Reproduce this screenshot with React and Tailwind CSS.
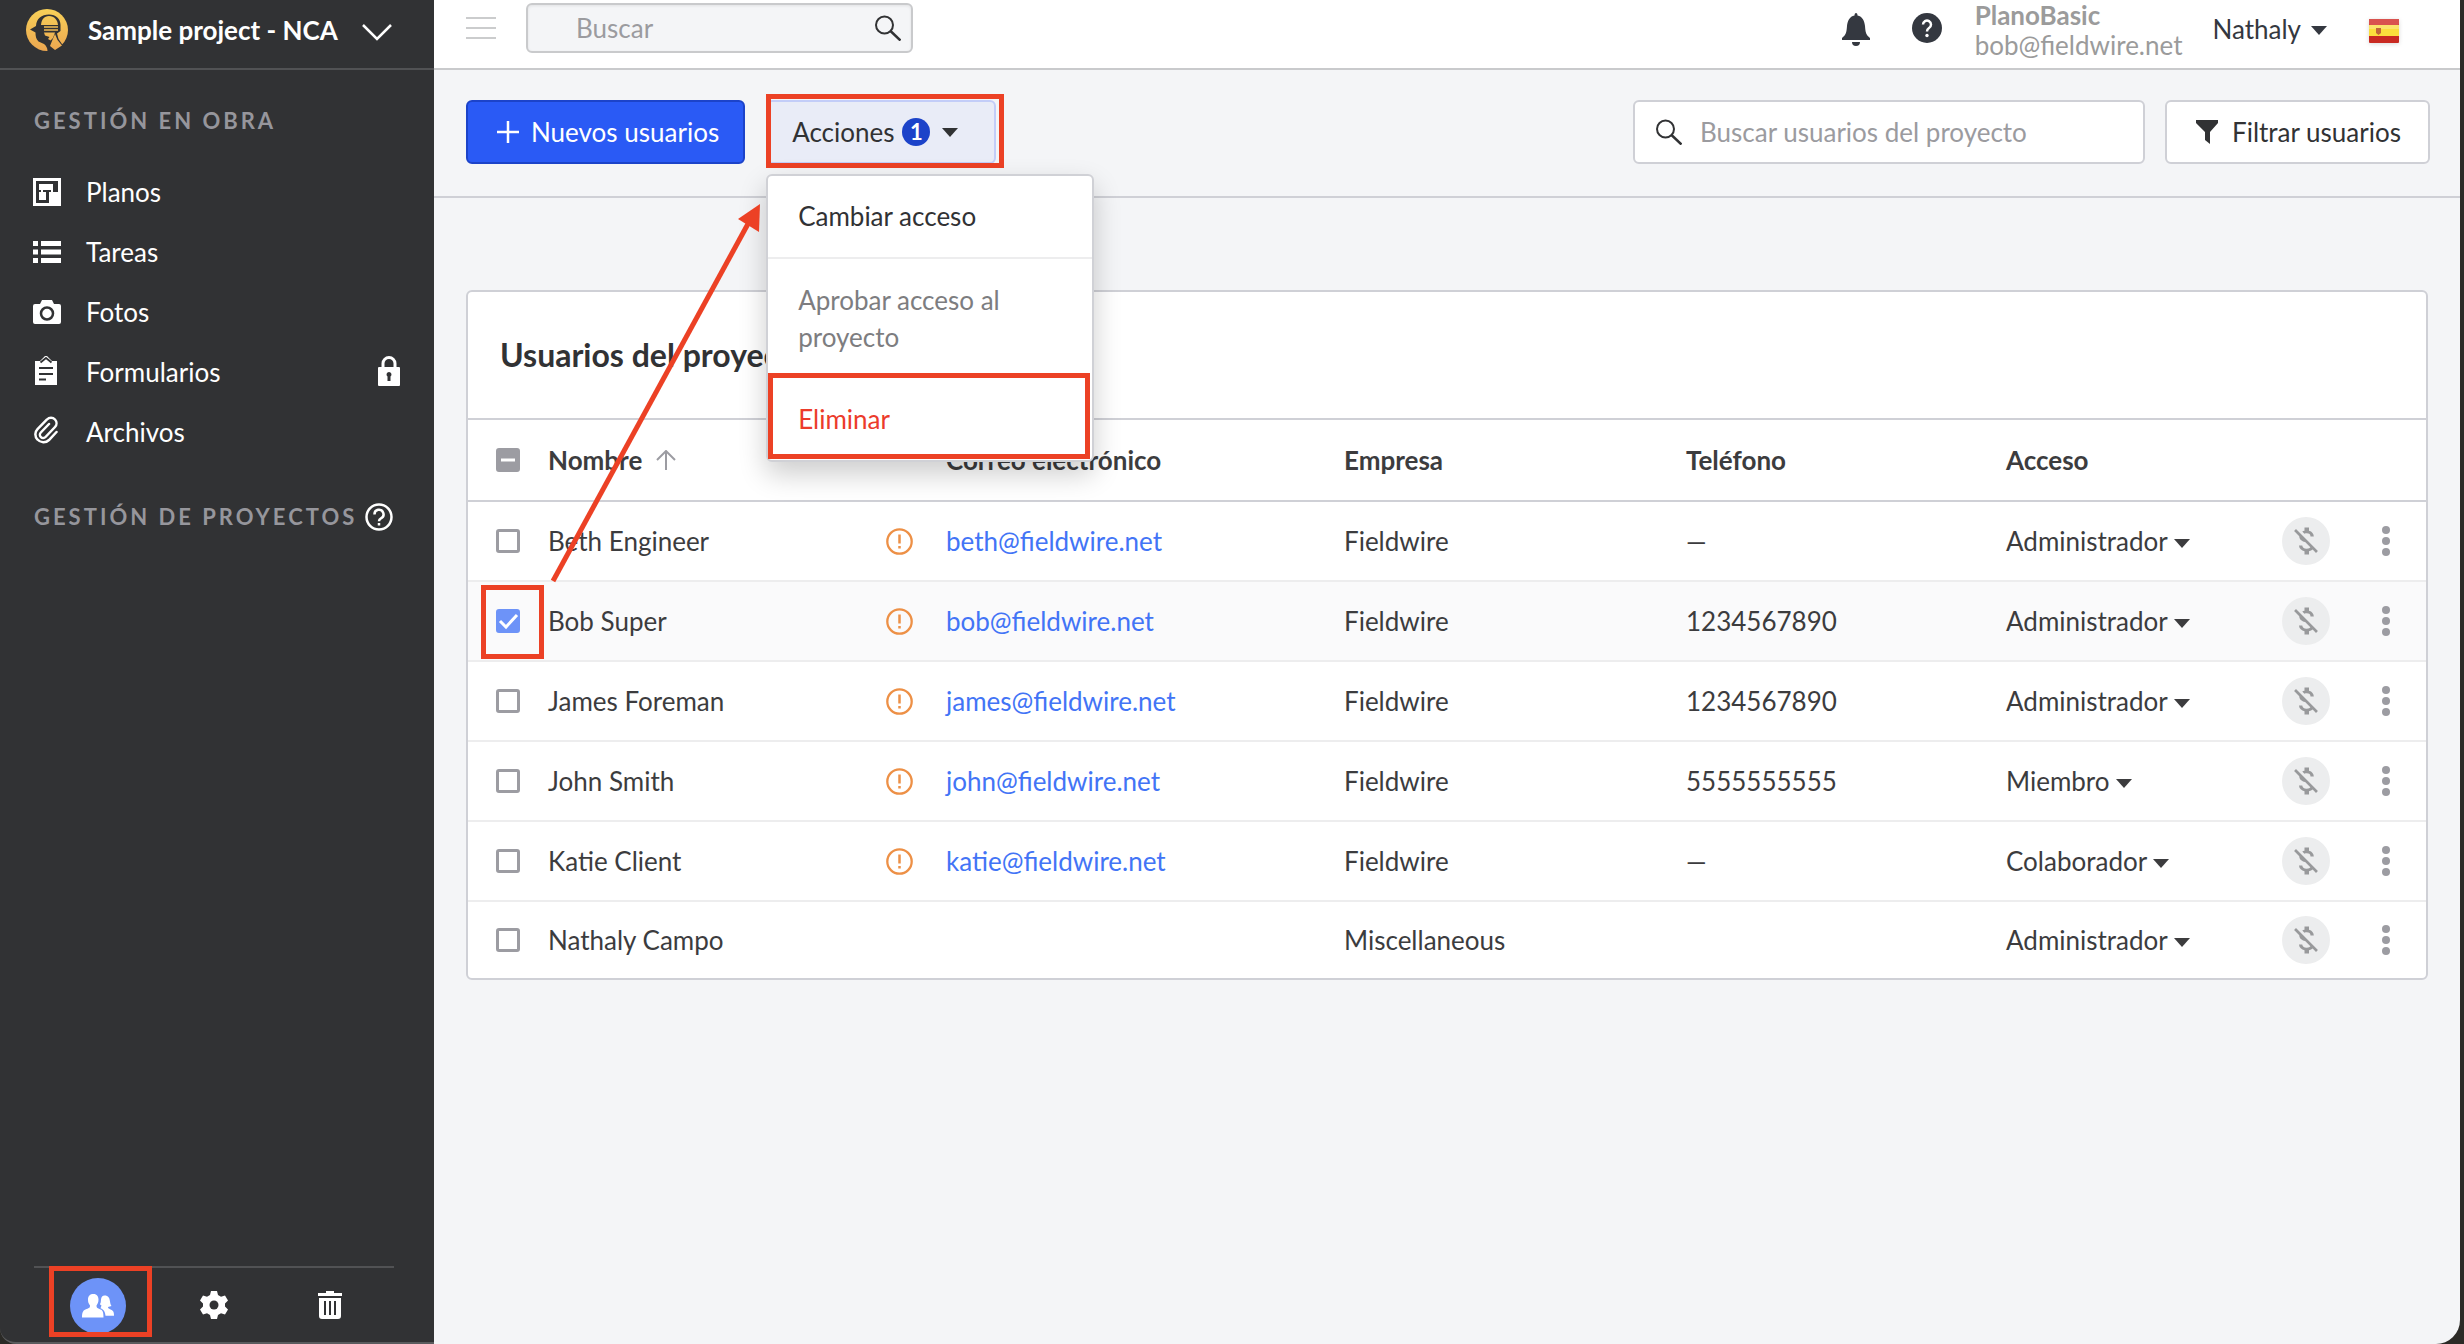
import React, { useState } from 'react';
import { MdMoneyOff } from 'react-icons/md';

const USERS = [
  { name: 'Beth Engineer', email: 'beth@fieldwire.net', company: 'Fieldwire', phone: '—', access: 'Administrador' },
  { name: 'Bob Super', email: 'bob@fieldwire.net', company: 'Fieldwire', phone: '1234567890', access: 'Administrador' },
  { name: 'James Foreman', email: 'james@fieldwire.net', company: 'Fieldwire', phone: '1234567890', access: 'Administrador' },
  { name: 'John Smith', email: 'john@fieldwire.net', company: 'Fieldwire', phone: '5555555555', access: 'Miembro' },
  { name: 'Katie Client', email: 'katie@fieldwire.net', company: 'Fieldwire', phone: '—', access: 'Colaborador' },
  { name: 'Nathaly Campo', email: '', company: 'Miscellaneous', phone: '', access: 'Administrador' },
];

const Logo = () => (
  <svg viewBox="0 0 42 42" className="h-[42px] w-[42px]">
    <defs>
      <linearGradient id="gold" x1="0" y1="0" x2="0" y2="42" gradientUnits="userSpaceOnUse">
        <stop offset="0" stopColor="#f8d158" />
        <stop offset="1" stopColor="#eba650" />
      </linearGradient>
    </defs>
    <circle cx="21" cy="21" r="21" fill="url(#gold)" />
    {/* head silhouette */}
    <path
      d="M4 20.500L10 17C10.500 9.500 15.500 5.500 23 5.500C30 5.500 34.500 10 34.500 16V22L31 24.500L32.500 30L37 36.500L29 42H21.500C21.500 39 20 36.500 18 35L12.500 32.500C10 30 9.500 27 9.500 23.500Z"
      fill="#313234"
    />
    {/* helmet, visor, face and hand */}
    <path d="M15 16C15.500 10.500 18 7 23 7C28.500 7 31.500 11 32 16Z" fill="url(#gold)" />
    <path d="M18 18H32M18 21H32" stroke="url(#gold)" strokeWidth="1.300" />
    <path d="M18 23.500H29L27 29L24.500 31.500L22 30L23.500 28L19 26.500Z" fill="url(#gold)" />
    <path d="M29 25L31.500 31L36 36.500L29 41L24 37L26 32Z" fill="url(#gold)" />
  </svg>
);

const PlanIcon = () => (
  <svg viewBox="0 0 28 28" className="h-7 w-7">
    <path fill="#fff" d="M0 0h28v28H0z" />
    <path fill="#313234" d="M3 3h22v11h-5V6H6v6h2v2H6v8h7v-8h-3v-2h8v2h-2v11H3z" />
  </svg>
);

const ListIcon = () => (
  <svg viewBox="0 0 28 22" className="h-[22px] w-7" fill="#fff">
    <path d="M0 0h5v5H0zM8 0h20v5H8zM0 8.500h5v5H0zM8 8.500h20v5H8zM0 17h5v5H0zM8 17h20v5H8z" />
  </svg>
);

const CameraIcon = () => (
  <svg viewBox="0 0 28 24" className="h-6 w-7">
    <path fill="#fff" d="M2 4h5l2-4h10l2 4h5a2 2 0 0 1 2 2v16a2 2 0 0 1-2 2H2a2 2 0 0 1-2-2V6a2 2 0 0 1 2-2z" />
    <circle cx="14" cy="13.500" r="6" fill="#fff" stroke="#313234" strokeWidth="2.500" />
  </svg>
);

const ClipboardIcon = () => (
  <svg viewBox="0 0 22 29" className="mb-1 ml-0.5 h-[29px] w-[22px]">
    <path fill="#fff" d="M0 5h5l5-5h2l5 5h5v24H0z" />
    <path d="M5.500 6.500L11 2l5.500 4.500M4 12h14M4 18h14M4 23.500h7" fill="none" stroke="#313234" strokeWidth="1.800" />
  </svg>
);

const ClipIcon = () => (
  <svg viewBox="0 0 24 28" className="mb-1 ml-px h-7 w-6" fill="none" stroke="#fff" strokeWidth="2.500" strokeLinecap="round">
    <path d="M22.500 16l-7.500 8a8 8 0 0 1-11.500-.5 7.500 7.500 0 0 1 0-10.500L13 3.500a5.500 5.500 0 0 1 8 0 5.500 5.500 0 0 1 0 7.500l-9.500 10a3.200 3.200 0 0 1-4.700-4.500L15 8" />
  </svg>
);

const LockIcon = () => (
  <svg viewBox="0 0 22 30" className="mb-0.5 h-[30px] w-[22px]">
    <path d="M5 12V7.500a6 6 0 0 1 12 0V12" fill="none" stroke="#fff" strokeWidth="3" />
    <rect y="11" width="22" height="19" rx="1" fill="#fff" />
    <path d="M11 16a2.500 2.500 0 0 1 1.500 4.500V25h-3v-4.500A2.500 2.500 0 0 1 11 16z" fill="#313234" />
  </svg>
);

const HelpOutline = () => (
  <svg viewBox="0 0 28 28" className="h-7 w-7" fill="none" stroke="#fff" strokeWidth="2.500">
    <circle cx="14" cy="14" r="12.500" />
    <path d="M9.500 11.500a4.500 4.500 0 1 1 6.500 3.800c-1.500.9-2 1.500-2 3" />
    <path d="M14 20v2.500" />
  </svg>
);

const SearchIcon = () => (
  <svg viewBox="0 0 26 26" className="h-[26px] w-[26px] shrink-0" fill="none" stroke="#313234" strokeWidth="2">
    <circle cx="9.500" cy="10" r="8.500" />
    <path d="M15.500 16l10 9.500" strokeWidth="2.500" />
  </svg>
);

const Caret = () => (
  <svg viewBox="0 0 16 9" className="h-[9px] w-4 shrink-0">
    <path d="M0 0h16L8 9z" fill="currentColor" />
  </svg>
);

const BellIcon = () => (
  <svg viewBox="0 0 28 33" className="h-[33px] w-7" fill="#343840">
    <path d="M14 0c1 0 1.500 1 1.500 2.500C20.500 3.500 22.500 8 23 13c.4 6 1 9 5 12v2H0v-2c4-3 4.600-6 5-12 .5-5 2.500-9.500 7.500-10.500C12.500 1 13 0 14 0zM10 29h8a4 4 0 0 1-8 0z" />
  </svg>
);

const HelpSolid = () => (
  <svg viewBox="0 0 30 30" className="h-[30px] w-[30px]">
    <circle cx="15" cy="15" r="15" fill="#343840" />
    <path d="M11 11.500a4 4 0 1 1 6 3.500c-1.500 1-2 1.700-2 3.500" fill="none" stroke="#fff" strokeWidth="2.500" />
    <circle cx="15" cy="22.500" r="1.700" fill="#fff" />
  </svg>
);

const SpainFlag = () => (
  <svg viewBox="0 0 30 24" className="h-6 w-[30px] drop-shadow-sm">
    <rect width="30" height="24" rx="1" fill="#c92a22" />
    <rect width="30" height="6" rx="1" fill="#d9534f" />
    <rect y="6" width="30" height="11" fill="#fbdf3c" />
    <rect y="6" width="30" height="4" fill="#fbe56c" />
    <path d="M7 9h5v5l-2.500 2L7 14z" fill="#c0673a" />
  </svg>
);

const FunnelIcon = () => (
  <svg viewBox="0 0 22 24" className="h-6 w-[22px]">
    <path d="M0 0h22v3l-8 9v12l-5-4v-8L0 3z" fill="#313234" />
  </svg>
);

const AlertIcon = () => (
  <svg viewBox="0 0 27 27" className="h-[27px] w-[27px]" fill="none" stroke="#ed9046" strokeWidth="2.300">
    <circle cx="13.500" cy="13.500" r="12.200" />
    <path d="M13.500 6.500v9M13.500 18v2.500" strokeWidth="2.500" />
  </svg>
);

const PeopleIcon = () => (
  <svg viewBox="0 0 32 24" className="h-6 w-8" fill="#fff">
    <path d="M11.500 0c3.500 0 5 2.500 5 5.500 0 3-1 4.500-2 6 0 2 .5 2.500 3 3.500 3 1 4 2 4 8.500H0c0-6 1.500-7.500 4.500-8.500 3-1 3.500-1.500 3.500-3.500-1.500-2-2-3.500-2-6C6 2 8 0 11.500 0z" />
    <path d="M22.500 1.500c4 0 5 2.500 5.500 6 .3 2 .5 3 1.500 4.500l-3.500 1c0 1.500 1 1.800 3 2.700 2 .8 3 2 3 6h-8.500c-.5-4-1.500-6-5-7.500l1-2.700c-1-.5-1.500-1-1.500-1.500 1-1 .8-3 1-4.500.3-2.500 1.500-4 3.500-4z" />
  </svg>
);

const GearIcon = () => (
  <svg viewBox="0 0 28 28" className="h-7 w-7">
    <path
      d="M11 0h6l1 4 3 1.700 4-1.200 3 5-3 2.900v3.200l3 2.900-3 5-4-1.200L18 24l-1 4h-6l-1-4-3-1.700-4 1.200-3-5 3-2.900v-3.200L0 9.500l3-5 4 1.200L10 4z"
      fill="#fff"
    />
    <circle cx="14" cy="14" r="4.500" fill="#313234" />
  </svg>
);

const TrashIcon = () => (
  <svg viewBox="0 0 24 28" className="h-7 w-6">
    <path d="M8 0h8v2h8v3H0V2h8zM1 7h22v18a3 3 0 0 1-3 3H4a3 3 0 0 1-3-3z" fill="#fff" />
    <path d="M7 10v14M12 10v14M17 10v14" stroke="#313234" strokeWidth="2" />
  </svg>
);

const NAV = [
  { label: 'Planos', icon: <PlanIcon /> },
  { label: 'Tareas', icon: <ListIcon /> },
  { label: 'Fotos', icon: <CameraIcon /> },
  { label: 'Formularios', icon: <ClipboardIcon />, locked: true },
  { label: 'Archivos', icon: <ClipIcon /> },
];

const Checkbox = ({ label, checked, mixed, onChange }) => (
  <label className="relative block h-6 w-6">
    <input
      type="checkbox"
      aria-label={label}
      checked={checked}
      onChange={onChange}
      className={`block h-6 w-6 appearance-none rounded-[3px] border-[3px] ${
        checked ? 'border-[#6d93f8] bg-[#6d93f8]' : mixed ? 'border-[#9c9ca2] bg-[#9c9ca2]' : 'border-[#9c9ca2] bg-white'
      }`}
    />
    {(checked || mixed) && (
      <svg viewBox="0 0 24 24" className="pointer-events-none absolute inset-0 h-6 w-6" fill="none" stroke="#fff" strokeWidth="3">
        <path d={checked ? 'M4 12l6 6L21 6' : 'M5 12h14'} />
      </svg>
    )}
  </label>
);

const Sidebar = () => (
  <aside className="flex w-[434px] shrink-0 flex-col rounded-bl-2xl border-b-2 border-[#5a5b5d] bg-[#313234] text-white">
    <button className="flex h-[70px] items-center border-b-2 border-[#515254] pb-2 pl-[26px] text-left">
      <Logo />
      <span className="ml-5 text-[26px] leading-8 font-bold">Sample project - NCA</span>
      <svg viewBox="0 0 30 17" className="mt-1 ml-6 h-[17px] w-[30px]" fill="none" stroke="#fff" strokeWidth="2.500">
        <path d="M1 1l14 14L29 1" />
      </svg>
    </button>

    <h2 className="mt-8 pl-[34px] text-[22px] leading-[38px] font-bold tracking-[3px] text-[#96969c]">GESTIÓN EN OBRA</h2>
    <nav className="mt-[22px]">
      {NAV.map((item) => (
        <a key={item.label} href="#" className="flex h-[60px] items-center pr-[34px] pl-[33px] text-[26px]">
          <span className="flex w-[53px] items-center">{item.icon}</span>
          <span className="flex-1">{item.label}</span>
          {item.locked && <LockIcon />}
        </a>
      ))}
    </nav>
    <div className="mt-9 flex items-center pl-[34px]">
      <h2 className="text-[22px] leading-[38px] font-bold tracking-[3px] text-[#96969c]">GESTIÓN DE PROYECTOS</h2>
      <button aria-label="Ayuda" className="ml-2">
        <HelpOutline />
      </button>
    </div>

    <div className="mt-auto mr-10 ml-[34px] flex border-t-2 border-[#515254] pl-[15px]">
      <div className="-mt-0.5 mb-[5px] flex h-[71px] w-[103px] items-start overflow-hidden border-[5px] border-[#ec4125] pt-[7px] pl-4">
        <button aria-label="Personas" className="flex h-14 w-14 shrink-0 items-center justify-center rounded-full bg-[#6d93f8]">
          <PeopleIcon />
        </button>
      </div>
      <button aria-label="Ajustes" className="ml-2 flex w-[108px] items-center justify-center">
        <GearIcon />
      </button>
      <button aria-label="Papelera" className="flex w-[124px] items-center justify-center">
        <TrashIcon />
      </button>
    </div>
  </aside>
);

const TopBar = () => (
  <header className="flex h-[70px] items-start border-b-2 border-[#c9cacc] bg-white pr-[61px] pl-8">
    <button aria-label="Menú" className="mt-[17px] flex w-[30px] flex-col gap-2">
      <span className="h-0.5 bg-[#cbcccd]" />
      <span className="h-0.5 bg-[#cbcccd]" />
      <span className="h-0.5 bg-[#cbcccd]" />
    </button>
    <label className="mt-[3px] ml-[30px] flex h-[50px] w-[387px] items-center rounded-md border-2 border-[#c9cacc] bg-[#f4f5f7] pr-2.5 pl-12 shadow-[inset_0_1px_3px_rgba(0,0,0,0.08)]">
      <input aria-label="Buscar" placeholder="Buscar" className="min-w-0 flex-1 text-[26px] outline-none placeholder:text-[#9b9b9f]" />
      <SearchIcon />
    </label>
    <div className="ml-auto flex items-start text-[26px]">
      <button aria-label="Notificaciones" className="mt-[13px]">
        <BellIcon />
      </button>
      <button aria-label="Ayuda" className="mt-[13px] ml-[42px]">
        <HelpSolid />
      </button>
      <div className="ml-[33px] leading-[30px] text-[#9b9b9b]">
        <p className="font-bold">PlanoBasic</p>
        <p>bob@fieldwire.net</p>
      </div>
      <button className="mt-3 ml-[30px] flex items-center gap-2.5 leading-[34px] text-[#343840]">
        Nathaly
        <span className="mt-0.5">
          <Caret />
        </span>
      </button>
      <button aria-label="Español" className="mt-[19px] ml-[42px]">
        <SpainFlag />
      </button>
    </div>
  </header>
);

const ActionsMenu = () => (
  <div className="absolute top-[74px] left-0 z-10 w-[328px] rounded-md border-2 border-[#d0d1d6] bg-white pb-px text-[26px] leading-[37px] shadow-[0_12px_28px_rgba(0,0,0,0.2)]">
    <button className="block h-[83px] w-full border-b-2 border-[#ededee] px-[30px] text-left text-[#313234]">Cambiar acceso</button>
    <button className="block h-[114px] w-full px-[30px] pt-1.5 text-left text-[#7d7d80]">Aprobar acceso al proyecto</button>
    <button className="block h-[86px] w-[322px] border-[5px] border-[#ec4125] px-[25px] pt-1.5 text-left text-[#ec3b2b]">Eliminar</button>
  </div>
);

const Toolbar = ({ count, open, onToggle }) => (
  <div className="flex items-center border-b-2 border-[#cfd0d6] pt-[30px] pr-[30px] pb-8 pl-8 text-[26px]">
    <button className="flex h-16 items-center rounded-md border-2 border-[#1c43c9] bg-[#2a5af5] pr-6 pl-[29px] text-white">
      <svg viewBox="0 0 22 22" className="mr-3 h-[22px] w-[22px]" stroke="#fff" strokeWidth="2.500">
        <path d="M11 0v22M0 11h22" />
      </svg>
      Nuevos usuarios
    </button>
    <div className="relative ml-[21px]">
      <button
        onClick={onToggle}
        aria-expanded={open}
        className="flex h-16 w-[230px] items-center rounded-md border-2 border-[#c3cdf8] bg-[#e9ecf7] pl-6 text-[#313234]"
      >
        Acciones
        <span className="ml-2 flex h-7 w-7 items-center justify-center rounded-full bg-[#1c43c9] text-[22px] leading-7 font-bold text-white">
          {count}
        </span>
        <span className="ml-3">
          <Caret />
        </span>
      </button>
      <div className="pointer-events-none absolute -top-1.5 left-0 h-[74px] w-[238px] border-[5px] border-[#ec4125]" />
      {open && <ActionsMenu />}
    </div>
    <label className="ml-auto flex h-16 w-[512px] items-center gap-[18px] rounded-md border-2 border-[#cfd0d6] bg-white px-[21px]">
      <SearchIcon />
      <input
        aria-label="Buscar usuarios del proyecto"
        placeholder="Buscar usuarios del proyecto"
        className="min-w-0 flex-1 outline-none placeholder:text-[#9b9b9f]"
      />
    </label>
    <button className="ml-5 flex h-16 items-center gap-3.5 rounded-md border-2 border-[#cfd0d6] bg-white pr-[27px] pl-[29px] text-[#313234]">
      <FunnelIcon />
      Filtrar usuarios
    </button>
  </div>
);

const UsersTable = ({ selected, onSelect }) => (
  <section className="mt-[92px] mr-8 ml-8 rounded-md border-2 border-[#cfd0d6] bg-white">
    <h1 className="px-8 py-[43px] text-[32px] leading-10 font-bold text-[#313234]">Usuarios del proyecto</h1>
    <table className="w-full table-fixed border-separate border-spacing-0 text-left text-[26px] leading-8 text-[#3c3c3e]">
      <colgroup>
        <col className="w-[80px]" />
        <col className="w-[338px]" />
        <col className="w-[60px]" />
        <col className="w-[398px]" />
        <col className="w-[342px]" />
        <col className="w-[320px]" />
        <col className="w-[276px]" />
        <col className="w-[80px]" />
        <col className="w-[64px]" />
      </colgroup>
      <thead>
        <tr className="h-[84px] *:border-y-2 *:border-[#cfd0d6]">
          <th className="pl-7">
            <Checkbox label="Seleccionar todos" checked={false} mixed={selected.length > 0} onChange={() => onSelect(null)} />
          </th>
          <th>
            <span className="flex items-center gap-3.5">
              Nombre
              <svg viewBox="0 0 20 20" className="h-5 w-5" fill="none" stroke="#9c9ca2" strokeWidth="2">
                <path d="M10 20V1M1 10l9-9 9 9" />
              </svg>
            </span>
          </th>
          <th />
          <th>Correo electrónico</th>
          <th>Empresa</th>
          <th>Teléfono</th>
          <th>Acceso</th>
          <th />
          <th />
        </tr>
      </thead>
      <tbody>
        {USERS.map((user) => {
          const checked = selected.includes(user.name);
          return (
            <tr
              key={user.name}
              className={`h-20 *:border-b-2 *:border-[#ededee] last:h-[76px] last:*:border-b-0 ${checked ? 'bg-[#fafafb]' : ''}`}
            >
              <td className="pl-7">
                <Checkbox label={user.name} checked={checked} onChange={() => onSelect(user.name)} />
              </td>
              <td>{user.name}</td>
              <td>{user.email && <AlertIcon />}</td>
              <td>
                {user.email && (
                  <a href={`mailto:${user.email}`} className="text-[#4274f6]">
                    {user.email}
                  </a>
                )}
              </td>
              <td>{user.company}</td>
              <td>{user.phone}</td>
              <td>
                <button className="flex items-center gap-1.5">
                  {user.access}
                  <span className="mt-1">
                    <Caret />
                  </span>
                </button>
              </td>
              <td>
                <button aria-label="Costos" className="flex h-12 w-12 items-center justify-center rounded-full bg-[#ecedee] text-[#98999b]">
                  <MdMoneyOff size={36} />
                </button>
              </td>
              <td>
                <button aria-label="Más opciones" className="ml-5 flex flex-col gap-[3px]">
                  <span className="h-2 w-2 rounded-full bg-[#9c9ca2]" />
                  <span className="h-2 w-2 rounded-full bg-[#9c9ca2]" />
                  <span className="h-2 w-2 rounded-full bg-[#9c9ca2]" />
                </button>
              </td>
            </tr>
          );
        })}
      </tbody>
    </table>
  </section>
);

const App = () => {
  const [selected, setSelected] = useState(['Bob Super']);
  const [menuOpen, setMenuOpen] = useState(true);

  const handleSelect = (name) => {
    if (!name) {
      setSelected(selected.length ? [] : USERS.map((u) => u.name));
      return;
    }
    setSelected(selected.includes(name) ? selected.filter((n) => n !== name) : [...selected, name]);
  };

  return (
    <div className="min-h-screen bg-[#2b2a26] pr-1 font-[Lato,sans-serif]">
      <div className="relative flex min-h-screen">
        <Sidebar />
        <main className="min-w-0 flex-1 rounded-br-3xl bg-[#f4f5f7]">
          <TopBar />
          <Toolbar count={selected.length} open={menuOpen} onToggle={() => setMenuOpen(!menuOpen)} />
          <UsersTable selected={selected} onSelect={handleSelect} />
        </main>

        {/* annotations: selected row and arrow to the actions menu */}
        <div className="pointer-events-none absolute top-[585px] left-[481px] z-20 h-[74px] w-[63px] border-[5px] border-[#ec4125]" />
        <svg viewBox="0 0 220 390" className="pointer-events-none absolute top-[200px] left-[546px] z-20 h-[390px] w-[220px]">
          <path d="M7 381L203 22" stroke="#ec4125" strokeWidth="5" />
          <path d="M214 4L192 19L213 32z" fill="#ec4125" />
        </svg>
      </div>
    </div>
  );
};

export default App;
